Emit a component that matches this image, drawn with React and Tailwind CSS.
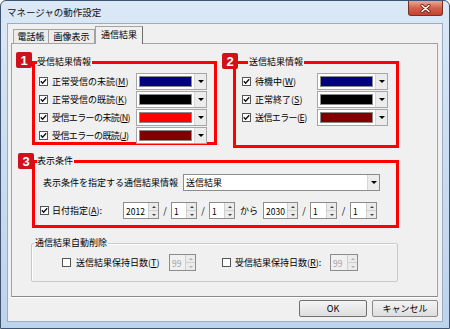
import React from 'react';

const font = "font-['Noto_Sans_CJK_JP','Noto_Sans_CJK_SC',sans-serif]";

function Check({ checked = true }) {
  return (
    <svg width="9" height="9" viewBox="0 0 9 9" className="shrink-0">
      <rect x="0.5" y="0.5" width="8" height="8" fill="#fff" stroke="#555" />
      {checked && <path d="M1.8 4.3 L3.6 6.2 L7.2 2.3" fill="none" stroke="#111" strokeWidth="1.4" />}
    </svg>
  );
}

function DownTri({ color = 'border-t-black' }) {
  return <div className={`h-0 w-0 border-x-[3px] border-t-[3px] border-x-transparent ${color}`} />;
}

function ColorCombo({ swatch }) {
  return (
    <div className="ml-auto flex h-[17px] w-[71px] shrink-0 border border-[#a6a6a6] bg-white">
      <div className="flex-1 p-[2px]">
        <div className={`h-full border border-[#8a8a8a] ${swatch}`} />
      </div>
      <div className="flex w-[12px] items-center justify-center border-l border-[#d6d6d6] bg-[#ececec]">
        <DownTri />
      </div>
    </div>
  );
}

function Spin({ value, width, disabled }) {
  return (
    <div className={`flex h-[17px] shrink-0 ${width} border border-[#8c8c8c] ${disabled ? 'bg-[#f0f0f0] text-[#a0a0a0]' : 'bg-white text-black'}`}>
      <div className="flex flex-1 items-center pl-[2px] text-[8.5px]">{value}</div>
      <div className="flex w-[10px] flex-col border-l border-[#d0d0d0]">
        <div className="flex flex-1 items-center justify-center border-b border-[#d0d0d0] bg-[#ebebeb]">
          <div className={`h-0 w-0 border-x-[2px] border-b-[2px] border-x-transparent ${disabled ? 'border-b-[#b0b0b0]' : 'border-b-[#444]'}`} />
        </div>
        <div className="flex flex-1 items-center justify-center bg-[#ebebeb]">
          <div className={`h-0 w-0 border-x-[2px] border-t-[2px] border-x-transparent ${disabled ? 'border-t-[#b0b0b0]' : 'border-t-[#444]'}`} />
        </div>
      </div>
    </div>
  );
}

function Badge({ n, pos }) {
  return (
    <div className={`absolute ${pos} flex h-[16px] w-[16px] items-center justify-center rounded-[2px] bg-[#cf1119] font-['Liberation_Sans',sans-serif] text-[13px] font-bold leading-none text-white`}>
      {n}
    </div>
  );
}

function ColorRow({ label, k, swatch, tight }) {
  return (
    <div className="flex h-[18px] items-start">
      <div className="flex h-[17px] items-center">
        <Check />
        <span className={`ml-[4px] whitespace-nowrap ${tight ? 'tracking-[-0.6px]' : ''}`}>
          {label}(<u>{k}</u>)
        </span>
      </div>
      <ColorCombo swatch={swatch} />
    </div>
  );
}

export default function App() {
  return (
    <div className={`h-[329px] w-[450px] bg-white ${font} text-[9px] leading-[12px] text-black`}>
      <div className="flex h-full flex-col rounded-t-[6px] border border-[#3f5470] bg-gradient-to-b from-[#dbe8f6] via-[#cadcf0] to-[#bed3ec]">
        {/* title bar */}
        <div className="flex h-[22px] shrink-0 items-start justify-between">
          <div className="flex h-full items-center pl-[6px] text-[9.5px] text-[#111]">マネージャの動作設定</div>
          <div className="mr-[6px] flex h-[15px] w-[35px] items-center justify-center rounded-b-[3px] border border-t-0 border-[#7a2f25] bg-gradient-to-b from-[#e9a897] via-[#d2604c] to-[#c5412e]">
            <svg width="11" height="9" viewBox="0 0 11 9">
              <path d="M2 1.5 L9 7.5 M9 1.5 L2 7.5" stroke="#5a1d16" strokeWidth="3" strokeLinecap="round" />
              <path d="M2 1.5 L9 7.5 M9 1.5 L2 7.5" stroke="#fff" strokeWidth="1.6" strokeLinecap="round" />
            </svg>
          </div>
        </div>

        {/* client */}
        <div className="mx-[6px] mb-[6px] flex flex-1 flex-col border border-[#98adc6] bg-[#f0f0f0]">
          {/* tabs */}
          <div className="flex items-end pl-[5px] pt-[2px]">
            <div className="flex h-[14px] w-[36px] items-center justify-center border border-b-0 border-[#a3a3a3] bg-[#ececec]">電話帳</div>
            <div className="flex h-[14px] w-[46px] items-center justify-center border border-b-0 border-l-0 border-[#a3a3a3] bg-[#ececec]">画像表示</div>
            <div className="relative z-10 -mb-px flex h-[18px] w-[48px] items-center justify-center border border-b-0 border-[#a3a3a3] border-r-[#6d6d6d] bg-[#f0f0f0] pb-[1px]">通信結果</div>
          </div>

          {/* panel */}
          <div className="ml-[3px] mr-[4px] h-[254px] border border-[#a3a3a3] border-b-[#8a8a8a] shadow-[0_1px_0_#ffffff]">
            <div className="flex flex-col pl-[20px] pt-[17px]">
              <div className="flex items-start gap-[16px]">
                {/* 受信結果情報 */}
                <div className="relative h-[84px] w-[185px] border-[3px] border-[#ff0000] pl-[4px] pr-[7px] pt-[9px]">
                  <Badge n="1" pos="left-[-19px] top-[-12px]" />
                  <span className="absolute left-[2px] top-[-8px] bg-[#f0f0f0] pr-[1px]">受信結果情報</span>
                  <ColorRow label="正常受信の未読" k="M" swatch="bg-[#000080]" />
                  <ColorRow label="正常受信の既読" k="K" swatch="bg-[#000000]" />
                  <ColorRow label="受信エラーの未読" k="N" swatch="bg-[#ff0000]" tight />
                  <ColorRow label="受信エラーの既読" k="J" swatch="bg-[#800000]" tight />
                </div>

                {/* 送信結果情報 */}
                <div className="relative h-[87px] w-[166px] border-[3px] border-[#ff0000] pl-[6px] pr-[8px] pt-[9px]">
                  <Badge n="2" pos="left-[-14px] top-[-11px]" />
                  <span className="absolute left-[12px] top-[-8px] bg-[#f0f0f0] px-[1px]">送信結果情報</span>
                  <ColorRow label="待機中" k="W" swatch="bg-[#000080]" />
                  <ColorRow label="正常終了" k="S" swatch="bg-[#000000]" />
                  <ColorRow label="送信エラー" k="E" swatch="bg-[#800000]" tight />
                </div>
              </div>

              {/* 表示条件 */}
              <div className="relative mt-[12px] h-[68px] w-[367px] border-[3px] border-[#ff0000] pt-[11px]">
                <Badge n="3" pos="left-[-17px] top-[-10px]" />
                <span className="absolute left-[2px] top-[-8px] bg-[#f0f0f0] pr-[1px]">表示条件</span>
                <div className="flex items-center pl-[8px]">
                  <span className="w-[140px] whitespace-nowrap">表示条件を指定する通信結果情報</span>
                  <div className="flex h-[17px] w-[197px] border border-[#8c8c8c] bg-white">
                    <div className="flex flex-1 items-center pl-[2px]">送信結果</div>
                    <div className="flex w-[12px] items-center justify-center border-l border-[#d6d6d6] bg-[#ececec]">
                      <DownTri />
                    </div>
                  </div>
                </div>
                <div className="mt-[11px] flex items-center pl-[5px]">
                  <Check />
                  <span className="ml-[3px] w-[71px] whitespace-nowrap">
                    日付指定(<u>A</u>):
                  </span>
                  <Spin value="2012" width="w-[36px]" />
                  <span className="w-[12px] text-center">/</span>
                  <Spin value="1" width="w-[26px]" />
                  <span className="w-[12px] text-center">/</span>
                  <Spin value="1" width="w-[26px]" />
                  <span className="w-[28px] text-center">から</span>
                  <Spin value="2030" width="w-[35px]" />
                  <span className="w-[12px] text-center">/</span>
                  <Spin value="1" width="w-[27px]" />
                  <span className="w-[13px] text-center">/</span>
                  <Spin value="1" width="w-[27px]" />
                </div>
              </div>

              {/* 通信結果自動削除 */}
              <div className="relative -ml-px mt-[15px] h-[39px] w-[367px] rounded-[2px] border border-[#c9c9c9] pl-[30px] pt-[10px] shadow-[inset_1px_1px_0_#ffffff]">
                <span className="absolute left-[2px] top-[-7px] bg-[#f0f0f0] px-[1px]">通信結果自動削除</span>
                <div className="flex items-center">
                  <Check checked={false} />
                  <span className="ml-[5px] w-[93px] whitespace-nowrap">
                    送信結果保持日数(<u>T</u>)
                  </span>
                  <Spin value="99" width="w-[27px]" disabled />
                  <div className="ml-[26px]">
                    <Check checked={false} />
                  </div>
                  <span className="ml-[4px] w-[95px] whitespace-nowrap">
                    受信結果保持日数(<u>R</u>):
                  </span>
                  <Spin value="99" width="w-[28px]" disabled />
                </div>
              </div>
            </div>
          </div>

          {/* buttons */}
          <div className="mr-[4px] mt-[3px] flex justify-end gap-[5px]">
            <button className="flex h-[17px] w-[68px] items-center justify-center rounded-[2px] border border-[#707070] bg-gradient-to-b from-[#f4f4f4] to-[#dddddd]">OK</button>
            <button className="flex h-[17px] w-[66px] items-center justify-center rounded-[2px] border border-[#8a8a8a] bg-gradient-to-b from-[#f4f4f4] to-[#dddddd]">キャンセル</button>
          </div>
        </div>
      </div>
    </div>
  );
}
